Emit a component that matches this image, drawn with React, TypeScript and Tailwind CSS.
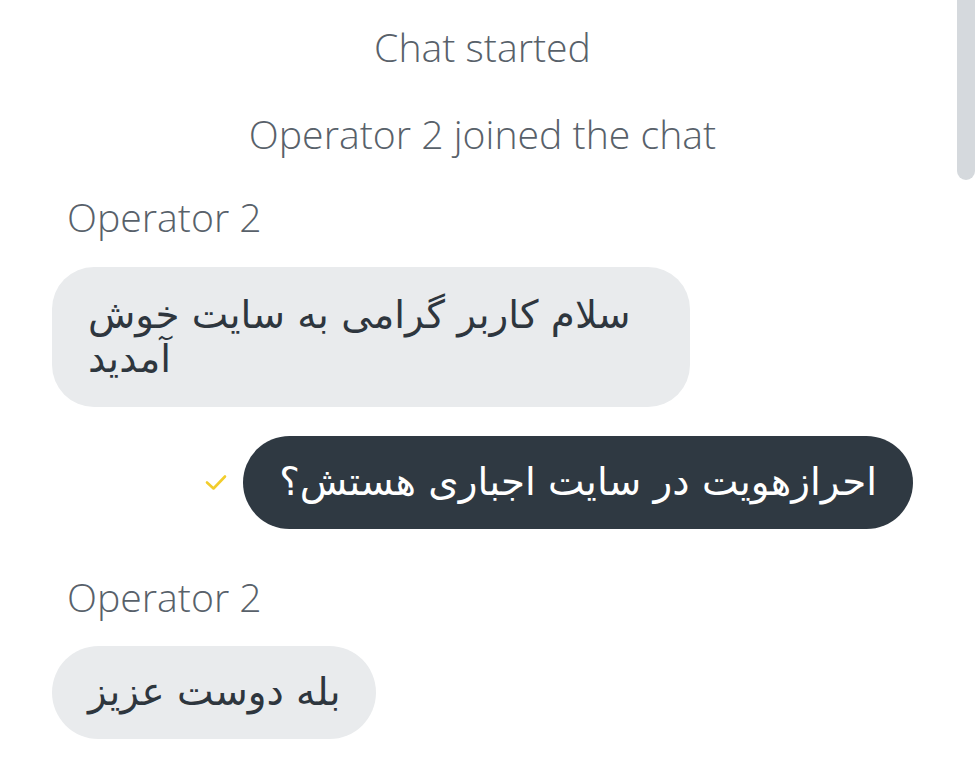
import React from 'react';

const latin = "font-['Open_Sans','Noto_Sans',sans-serif] font-light text-[39.2px] leading-[50px] text-[#58616a]";
const fa = "font-['DejaVu_Sans','Noto_Sans',sans-serif] text-[38.8px]";

const Check = () => (
  <svg width="22" height="17" viewBox="0 0 22 17" fill="none">
    <path d="M2 8.5l6.5 6L20 2.5" stroke="#f2cd2c" strokeWidth="2.6" strokeLinecap="round" strokeLinejoin="round" />
  </svg>
);

const App: React.FC = () => {
  return (
    <div className="flex h-[768px] w-[977px] overflow-hidden bg-white">
      <div className="flex flex-1 flex-col pl-[52px] pr-[44px] pt-[22px]">
        {/* system notices */}
        <p className={`${latin} text-center`}>Chat started</p>
        <p className={`${latin} mt-[37px] text-center`}>Operator 2 joined the chat</p>

        {/* operator msg */}
        <p className={`${latin} mt-[33px] pl-[15px]`}>Operator 2</p>
        <div className="mt-[25px] flex">
          <div dir="rtl" className={`${fa} w-[638px] rounded-[42px] bg-[#e9ebed] px-[36px] py-[26px] text-left leading-[44px] text-[#2e363e]`}>
            سلام کاربر گرامی به سایت خوش آمدید
          </div>
        </div>

        {/* visitor msg */}
        <div className="mt-[29px] flex items-center justify-end gap-[16px]">
          <Check />
          <div dir="rtl" className={`${fa} flex h-[93px] items-center rounded-full bg-[#2f3942] px-[36px] text-white`}>
            احرازهویت در سایت اجباری هستش؟
          </div>
        </div>

        <p className={`${latin} mt-[43px] pl-[15px]`}>Operator 2</p>
        <div className="mt-[24px] flex">
          <div dir="rtl" className={`${fa} flex h-[93px] items-center rounded-full bg-[#e9ebed] px-[36px] text-[#2e363e]`}>
            بله دوست عزیز
          </div>
        </div>
      </div>

      {/* scrollbar */}
      <div className="w-[20px] pr-[2px]">
        <div className="h-[180px] w-[18px] rounded-b-full bg-[#d5d9dd]" />
      </div>
    </div>
  );
};

export default App;
